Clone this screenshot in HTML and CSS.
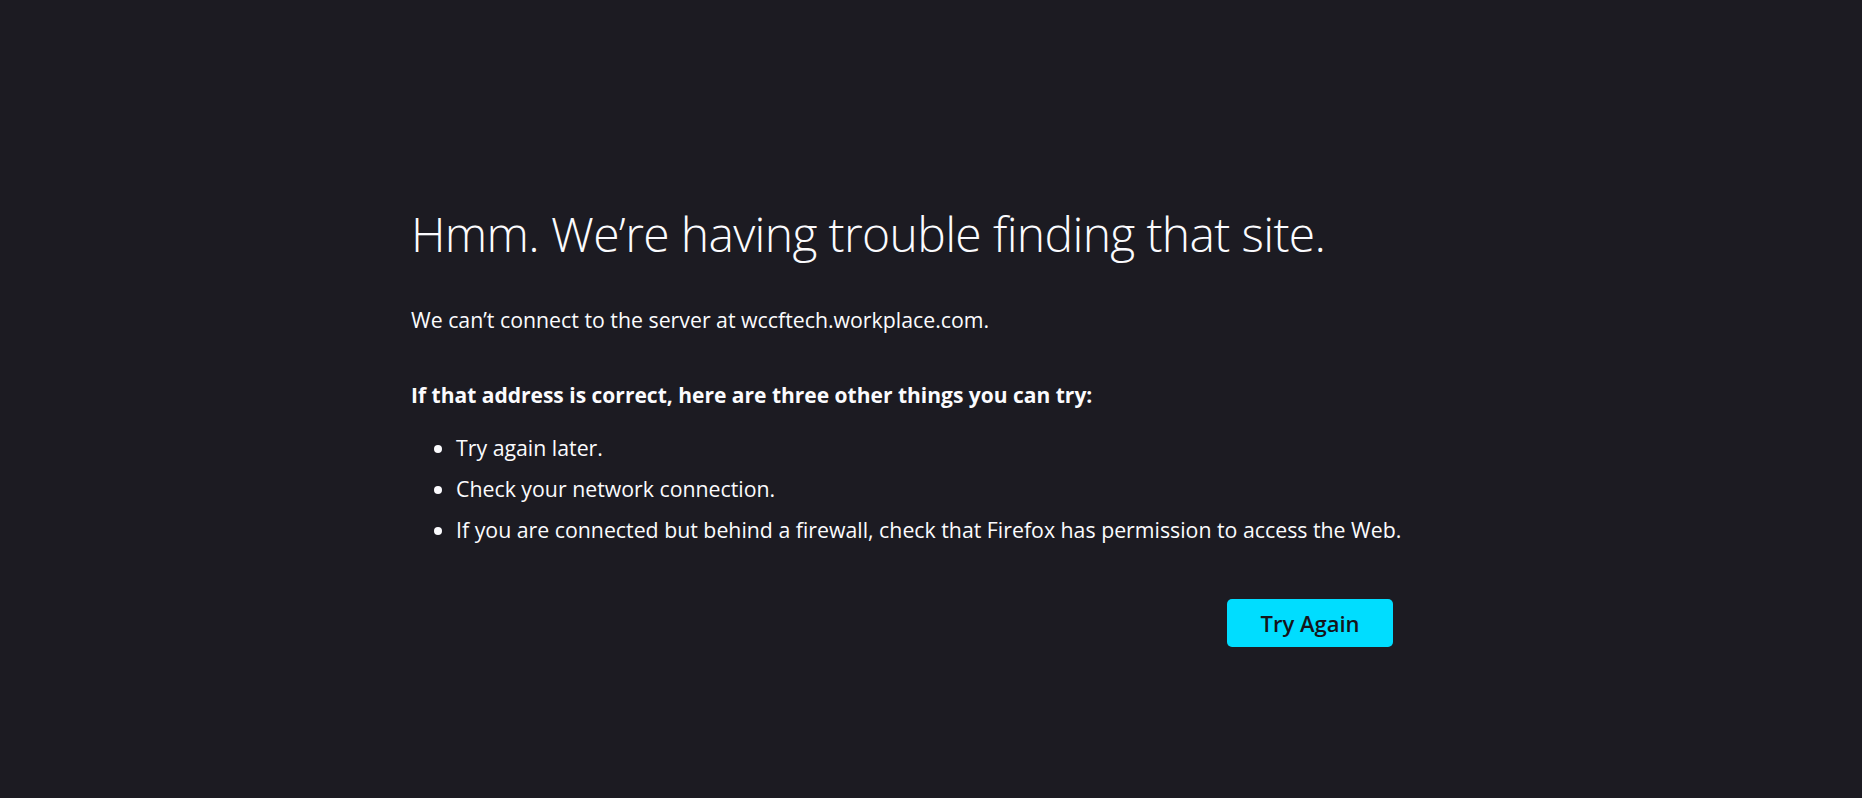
FILE: index.html
```html
<!DOCTYPE html>
<html lang="en">
<head>
<meta charset="utf-8">
<title>Server Not Found</title>
<link rel="stylesheet" href="styles.css">
</head>
<body>
<main class="page">
  <div class="container">
    <h1 class="title">Hmm. We’re having trouble finding that site.</h1>
    <p class="desc">We can’t connect to the server at wccftech.workplace.com.</p>
    <p class="hint">If that address is correct, here are three other things you can try:</p>
    <ul class="tips">
      <li>Try again later.</li>
      <li>Check your network connection.</li>
      <li>If you are connected but behind a firewall, check that Firefox has permission to access the Web.</li>
    </ul>
    <div class="actions">
      <button class="retry" type="button">Try Again</button>
    </div>
  </div>
</main>
</body>
</html>
```

FILE: styles.css
```css
html, body {
  margin: 0;
  height: 100%;
}
body {
  background: #1c1b22;
  color: #fbfbfe;
  font-family: "Open Sans", "Noto Sans", sans-serif;
}
.page {
  padding: 201px 0 0 411px;
}
.container {
  width: 982px;
}
.title {
  margin: 0;
  font-weight: 300;
  font-size: 48px;
  line-height: 66px;
  letter-spacing: -0.65px;
}
.desc {
  margin: 38px 0 0;
  font-size: 21.3px;
  line-height: 30px;
}
.hint {
  margin: 45px 0 0;
  font-size: 21px;
  line-height: 30px;
  font-weight: 700;
}
.tips {
  margin: 23px 0 0;
  padding-left: 45px;
  font-size: 21.3px;
  line-height: 30px;
}
.tips li {
  white-space: nowrap;
}
.tips li + li {
  margin-top: 11px;
}
.actions {
  margin-top: 54px;
  display: flex;
  justify-content: flex-end;
}
.retry {
  width: 166px;
  height: 48px;
  border: 0;
  border-radius: 5px;
  background: #00ddff;
  color: #15141a;
  font-family: inherit;
  font-size: 22px;
  font-weight: 600;
}
```
